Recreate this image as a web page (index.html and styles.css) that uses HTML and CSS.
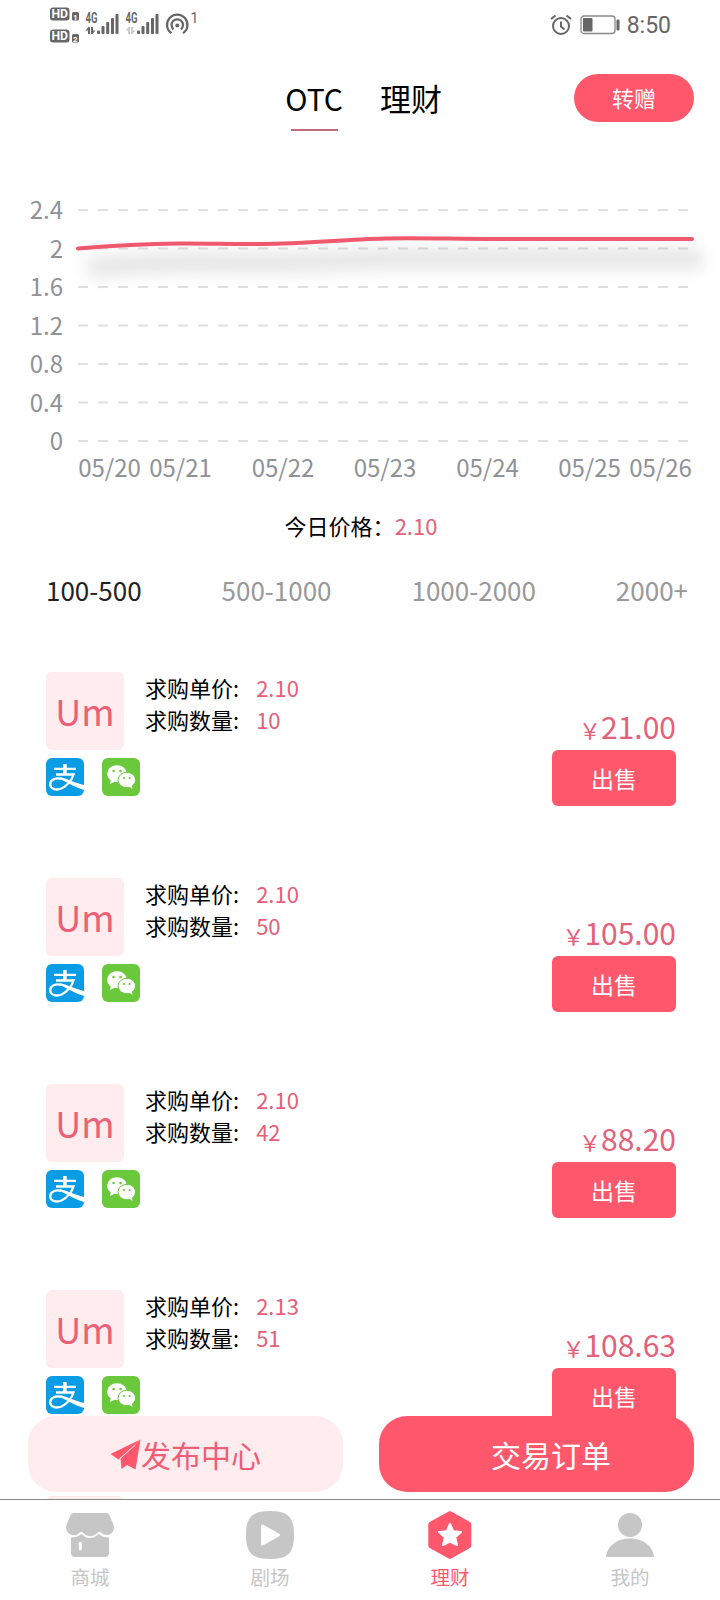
FILE: index.html
```html
<!DOCTYPE html>
<html lang="zh-CN">
<head>
  <meta charset="UTF-8">
  <meta name="viewport" content="width=device-width, initial-scale=1.0">
  <title>OTC</title>
  <link rel="stylesheet" href="styles.css">
</head>
<body>
  <!-- Shared icons -->
  <svg class="sprite" width="0" height="0">
    <symbol id="alipay" viewBox="0 0 38 38">
      <rect width="38" height="38" rx="6" fill="#0a9de6"/>
      <path d="M8 10.900h22M10 16.500h17.500C26 22 21 28 15.500 30.500 10.500 32.500 4.500 31.500 4.200 26.500 4 21.500 10 19.500 15 20.800" fill="none" stroke="#fff" stroke-width="2.300"/>
      <path d="M13.500 19.300c6 .6 12 4.500 24.500 7.700v5c-9-2.500-16.500-7.500-23.500-10.800z" fill="#fff"/>
      <path d="M17.100 6h3.600v10h-3.600z" fill="#fff"/>
    </symbol>
    <symbol id="wechat" viewBox="0 0 38 38">
      <rect width="38" height="38" rx="6" fill="#6ac83b"/>
      <ellipse cx="15" cy="15.700" rx="10" ry="8.500" fill="#fff"/>
      <path d="M9 21l-1 5 5-2.500z" fill="#fff"/>
      <ellipse cx="24.800" cy="22" rx="8.800" ry="7.700" fill="#fff" stroke="#6ac83b" stroke-width="1"/>
      <path d="M27 28.500l3.600 2.400-.9-4.400z" fill="#fff"/>
      <g fill="#6ac83b">
        <circle cx="11.600" cy="13" r="1.300"/>
        <circle cx="18.500" cy="13" r="1.300"/>
        <circle cx="22" cy="20" r="1.100"/>
        <circle cx="27.600" cy="20" r="1.100"/>
      </g>
    </symbol>
  </svg>

  <div class="app">
    <div class="status-bar">
      <svg class="status-left" width="160" height="44" viewBox="46 0 160 44" fill="#666">
        <rect x="50" y="7.500" width="19.500" height="13" rx="3"/>
        <rect x="50" y="29.500" width="19.500" height="13" rx="3"/>
        <rect x="72" y="12" width="7" height="8.500" rx="1.500"/>
        <rect x="72" y="34" width="7" height="8.500" rx="1.500"/>
        <g class="hd-text">
          <text x="51.500" y="18.300" textLength="16.500" lengthAdjust="spacingAndGlyphs">HD</text>
          <text x="51.500" y="40.300" textLength="16.500" lengthAdjust="spacingAndGlyphs">HD</text>
          <text class="hd-num" x="73" y="19.500">1</text>
          <text class="hd-num" x="73" y="41.500">2</text>
        </g>
        <g class="net-text">
          <text x="85.500" y="23" textLength="12" lengthAdjust="spacingAndGlyphs">4G</text>
          <text x="125.500" y="23" textLength="12" lengthAdjust="spacingAndGlyphs">4G</text>
        </g>
        <g id="bars">
          <rect x="97" y="30.500" width="3" height="3.500" rx="1"/>
          <rect x="101.500" y="26" width="3" height="8" rx="1"/>
          <rect x="106.200" y="22" width="3" height="12" rx="1"/>
          <rect x="111" y="18" width="3" height="16" rx="1"/>
          <rect x="115.500" y="14" width="3" height="20" rx="1"/>
        </g>
        <use href="#bars" x="40"/>
        <path d="M85.500 30.500l3-3.500h1.500v7h-2v-3.500zM91 27h2v3.500h2.500l-3 3.500H91z"/>
        <path d="M125.500 30.500l3-3.500h1.500v7h-2v-3.500zM131 27h2v3.500h2.500l-3 3.500H131z" fill="#ccc"/>
        <g fill="none" stroke="#666" stroke-width="2.200">
          <path d="M171.500 33.200a10.200 10.200 0 1 1 11.500 0"/>
          <path d="M173.500 29.300a5.700 5.700 0 1 1 7.500 0"/>
        </g>
        <circle cx="177.300" cy="25.500" r="2"/>
        <text class="hotspot" x="190.500" y="23">1</text>
      </svg>
      <div class="status-right">
        <svg width="22" height="22" viewBox="0 0 22 22" fill="none" stroke="#666" stroke-width="2">
          <circle cx="11" cy="12" r="8"/>
          <path d="M11 7.500v5l3.500 3M1 5l4.500-3.500M21 5l-4.500-3.500"/>
        </svg>
        <svg width="40" height="20" viewBox="0 0 40 20">
          <rect x="1" y="1" width="34" height="17.500" rx="3" fill="none" stroke="#888" stroke-width="1.300"/>
          <rect x="3" y="3" width="9.500" height="13.500" rx="1" fill="#666"/>
          <rect x="36.500" y="4.500" width="3" height="11" rx="1" fill="#666"/>
        </svg>
        <span class="clock">8:50</span>
      </div>
    </div>

    <header class="header">
      <div class="header-tabs">
        <span class="header-tab active">OTC</span>
        <span class="header-tab">理财</span>
      </div>
      <button class="btn-gift">转赠</button>
    </header>

    <svg class="chart" width="720" height="320" viewBox="0 180 720 320">
      <defs>
        <filter id="lineShadow" filterUnits="userSpaceOnUse" x="40" y="200" width="680" height="120">
          <feGaussianBlur stdDeviation="8"/>
        </filter>
      </defs>
      <path class="grid" d="M78 210H692M78 248.500H692M78 287H692M78 325.500H692M78 364H692M78 402.500H692M78 441H692"/>
      <path class="line-shadow" filter="url(#lineShadow)" d="M88 267.500C122 264.500 156 262.700 190 262.500S258 263.500 293 262.500 361 259 395 259H702"/>
      <path class="line" d="M78 248.500C112 245.500 146 243.700 180 243.500S248 244.800 283 243.500 351 239.300 385 238.500 453 239 487 239H692"/>
      <g class="axis axis-y">
        <text x="63" y="219">2.4</text>
        <text x="63" y="257.500">2</text>
        <text x="63" y="296">1.6</text>
        <text x="63" y="334.500">1.2</text>
        <text x="63" y="373">0.8</text>
        <text x="63" y="411.500">0.4</text>
        <text x="63" y="450">0</text>
      </g>
      <g class="axis axis-x">
        <text x="109.500" y="476.500">05/20</text>
        <text x="180.500" y="476.500">05/21</text>
        <text x="283" y="476.500">05/22</text>
        <text x="385" y="476.500">05/23</text>
        <text x="487.500" y="476.500">05/24</text>
        <text x="589.500" y="476.500">05/25</text>
        <text x="660.500" y="476.500">05/26</text>
      </g>
    </svg>

    <p class="today">今日价格：<span>2.10</span></p>

    <nav class="ranges">
      <span class="active">100-500</span>
      <span>500-1000</span>
      <span>1000-2000</span>
      <span>2000+</span>
    </nav>

    <main class="orders">
      <div class="order">
        <div class="order-user">
          <div class="avatar">Um</div>
          <div class="pays">
            <svg><use href="#alipay"/></svg>
            <svg><use href="#wechat"/></svg>
          </div>
        </div>
        <div class="order-info">
          <p>求购单价:<b>2.10</b></p>
          <p>求购数量:<b>10</b></p>
        </div>
        <div class="order-sell">
          <p class="price"><small>￥</small>21.00</p>
          <button>出售</button>
        </div>
      </div>

      <div class="order">
        <div class="order-user">
          <div class="avatar">Um</div>
          <div class="pays">
            <svg><use href="#alipay"/></svg>
            <svg><use href="#wechat"/></svg>
          </div>
        </div>
        <div class="order-info">
          <p>求购单价:<b>2.10</b></p>
          <p>求购数量:<b>50</b></p>
        </div>
        <div class="order-sell">
          <p class="price"><small>￥</small>105.00</p>
          <button>出售</button>
        </div>
      </div>

      <div class="order">
        <div class="order-user">
          <div class="avatar">Um</div>
          <div class="pays">
            <svg><use href="#alipay"/></svg>
            <svg><use href="#wechat"/></svg>
          </div>
        </div>
        <div class="order-info">
          <p>求购单价:<b>2.10</b></p>
          <p>求购数量:<b>42</b></p>
        </div>
        <div class="order-sell">
          <p class="price"><small>￥</small>88.20</p>
          <button>出售</button>
        </div>
      </div>

      <div class="order">
        <div class="order-user">
          <div class="avatar">Um</div>
          <div class="pays">
            <svg><use href="#alipay"/></svg>
            <svg><use href="#wechat"/></svg>
          </div>
        </div>
        <div class="order-info">
          <p>求购单价:<b>2.13</b></p>
          <p>求购数量:<b>51</b></p>
        </div>
        <div class="order-sell">
          <p class="price"><small>￥</small>108.63</p>
          <button>出售</button>
        </div>
      </div>

      <div class="order">
        <div class="order-user">
          <div class="avatar"></div>
        </div>
      </div>
    </main>

    <!-- Floating buttons above the tab bar -->
    <div class="actions">
      <button class="action action-publish">
        <svg width="31" height="31" viewBox="0 0 31 31" fill="#ff586c">
          <path d="M30.500.5L.5 15 8.500 20.500z"/>
          <path d="M30.500.5L10.500 19.500l1 10.500 5.500-4 8.500 4.500z"/>
          <path d="M25.500 6L10 19.500" stroke="#ffecee" stroke-width=".8"/>
        </svg>
        发布中心
      </button>
      <button class="action action-orders">交易订单</button>
    </div>

    <footer class="tabbar">
      <div class="tab">
        <svg width="48" height="48" viewBox="0 0 48 48" fill="currentColor">
          <path d="M8 2h32c2 0 3 1 3.600 2.500L47.500 14c1.500 5-1.500 10-6.500 10-3 0-4.500-1-5.500-2.300-1.500-1-2.500-1-4 0C30 23.500 27 25 24 25s-5.500-1.500-7-3.500c-1-1-2-1-3.500 0C12 23.500 9.500 24.500 7 24 2 24-1 19 .5 14L4.400 4.500C5 3 6 2 8 2z"/>
          <path d="M5 26.500c4.500 0 7-1 10.500-3.500 3 2.500 5 4 8.500 4s6-1.500 8.500-4c3 2.500 6 3.500 10.500 3.500V42c0 2.500-1.500 4-4 4H9c-2.500 0-4-1.500-4-4z"/>
          <rect x="12.800" y="31" width="3" height="8.500" rx="1.400" fill="#fff"/>
        </svg>
        <span>商城</span>
      </div>
      <div class="tab">
        <svg width="48" height="48" viewBox="0 0 48 48" fill="currentColor">
          <path d="M24 0C42 0 48 6 48 24S42 48 24 48 0 42 0 24 6 0 24 0z"/>
          <path d="M16.500 15L32.500 24 16.500 33z" fill="#fff" stroke="#fff" stroke-width="3" stroke-linejoin="round"/>
        </svg>
        <span>剧场</span>
      </div>
      <div class="tab active">
        <svg width="48" height="48" viewBox="0 0 48 48" fill="currentColor">
          <path d="M24 3L42.500 13.500V34.500L24 45 5 34.500V13.500z" stroke="currentColor" stroke-width="5.500" stroke-linejoin="round"/>
          <path d="M24 13L27.300 20.200 35 21 29.200 26.200 31 34 24 30.500 17 34 18.800 26.200 13 21 20.700 20.200z" fill="#fff" stroke="#fff" stroke-width="2" stroke-linejoin="round"/>
        </svg>
        <span>理财</span>
      </div>
      <div class="tab">
        <svg width="48" height="48" viewBox="0 0 48 48" fill="currentColor">
          <circle cx="24" cy="14" r="12"/>
          <path d="M0 46C1 35 11 27.500 24 27.500S47 35 48 46z"/>
        </svg>
        <span>我的</span>
      </div>
    </footer>
  </div>
</body>
</html>
```

FILE: styles.css
```css
* {
  box-sizing: border-box;
}

body {
  margin: 0;
  background-color: #fff;
  color: #000;
  font-family: "Noto Sans CJK SC", sans-serif;
  font-weight: 400;
}

p {
  margin: 0;
}

button {
  border: none;
  padding: 0;
  font-family: inherit;
  background-color: #ff586c;
  color: #fff;
}

svg {
  display: block;
}

.sprite {
  position: absolute;
}

.app {
  position: relative;
  display: flex;
  flex-direction: column;
  width: 720px;
  height: 1600px;
  overflow: hidden;
}

/* Status bar */
.status-bar {
  flex: none;
  display: flex;
  justify-content: space-between;
  height: 50px;
  padding: 0 49px 0 46px;
  font-family: Roboto, sans-serif;
}

.status-right {
  display: flex;
  align-items: center;
  height: 50px;
  gap: 8px;
}

.clock {
  margin-left: -1px;
  font-size: 23px;
  color: #666;
}

.hd-text {
  font-size: 12px;
  font-weight: 700;
  fill: #fff;
}

.hd-num {
  font-size: 8px;
}

.net-text {
  font-size: 14px;
  font-weight: 700;
}

.hotspot {
  font-size: 14px;
}

/* Header */
.header {
  flex: none;
  display: flex;
  justify-content: flex-end;
  align-items: center;
  height: 96px;
  padding-right: 26px;
}

.header-tabs {
  display: flex;
  gap: 37px;
  margin-right: 132px;
}

.header-tab {
  font-size: 31px;
  line-height: 44px;
  padding-bottom: 10px;
  margin-top: 9px;
}

.header-tab.active {
  position: relative;
  font-size: 30px;
}

.header-tab.active::after {
  content: "";
  position: absolute;
  left: 50%;
  bottom: -1px;
  width: 47px;
  height: 2px;
  margin-left: -23px;
  background-color: #bd6c7c;
}

.btn-gift {
  width: 120px;
  height: 48px;
  padding-bottom: 2px;
  border-radius: 24px;
  font-size: 22px;
}

/* Chart */
.chart {
  flex: none;
  margin-top: 34px;
}

.grid {
  fill: none;
  stroke: #e0e0e0;
  stroke-width: 2;
  stroke-dasharray: 10 10;
}

.line {
  fill: none;
  stroke: #f0586e;
  stroke-width: 4;
  stroke-linecap: round;
}

.line-shadow {
  fill: none;
  stroke: #000;
  stroke-opacity: 0.1;
  stroke-width: 20;
}

.axis {
  font-size: 24px;
  fill: #8f9296;
}

.axis-y {
  text-anchor: end;
}

.axis-x {
  text-anchor: middle;
}

.today {
  margin-top: 9px;
  padding-left: 2px;
  font-size: 22px;
  line-height: 32px;
  text-align: center;
}

.today span {
  color: #e5607a;
}

/* Amount ranges */
.ranges {
  display: flex;
  justify-content: space-between;
  margin-top: 30px;
  padding: 0 32px 0 46px;
  font-size: 26px;
  line-height: 38px;
  color: #999;
}

.ranges .active {
  color: #222;
}

/* Orders */
.orders {
  margin-top: 63px;
}

.order {
  display: flex;
  height: 206px;
  padding: 0 44px 0 46px;
}

.order-user {
  width: 99px;
}

.avatar {
  width: 78px;
  height: 78px;
  border-radius: 6px;
  background-color: #ffecee;
  color: #ed5f76;
  font-size: 36px;
  line-height: 77px;
  text-align: center;
}

.pays {
  display: flex;
  gap: 18px;
  margin-top: 8px;
}

.pays svg {
  flex: none;
  width: 38px;
  height: 38px;
}

.order-info {
  margin-top: -1px;
  font-size: 22px;
  line-height: 32px;
}

.order-info b {
  margin-left: 17px;
  font-weight: 400;
  color: #e5607a;
}

.order-sell {
  margin-left: auto;
  padding-top: 32px;
  text-align: right;
}

.price {
  height: 46px;
  font-size: 30px;
  line-height: 44px;
  color: #e5607a;
}

.price small {
  font-size: 22px;
  line-height: 1;
}

.order-sell button {
  display: block;
  width: 124px;
  height: 56px;
  margin-left: auto;
  border-radius: 6px;
  font-size: 23px;
}

/* Floating actions */
.actions {
  position: absolute;
  left: 28px;
  right: 26px;
  bottom: 108px;
  display: flex;
  justify-content: space-between;
}

.action {
  display: flex;
  align-items: center;
  width: 315px;
  height: 76px;
  border-radius: 28px;
  font-size: 30px;
}

.action-publish {
  padding-left: 82px;
  background-color: #ffecee;
  color: #ed5f76;
}

.action-orders {
  padding-left: 112px;
}

/* Tab bar */
.tabbar {
  position: absolute;
  left: 0;
  right: 0;
  bottom: 0;
  display: flex;
  height: 101px;
  border-top: 1px solid #888;
  background-color: #fff;
}

.tab {
  flex: 1;
  display: flex;
  flex-direction: column;
  align-items: center;
  padding-top: 11px;
  font-size: 19.5px;
  line-height: 28px;
  color: #c6c6c6;
}

.tab span {
  margin-top: 4px;
}

.tab.active {
  color: #ff586c;
}
```
